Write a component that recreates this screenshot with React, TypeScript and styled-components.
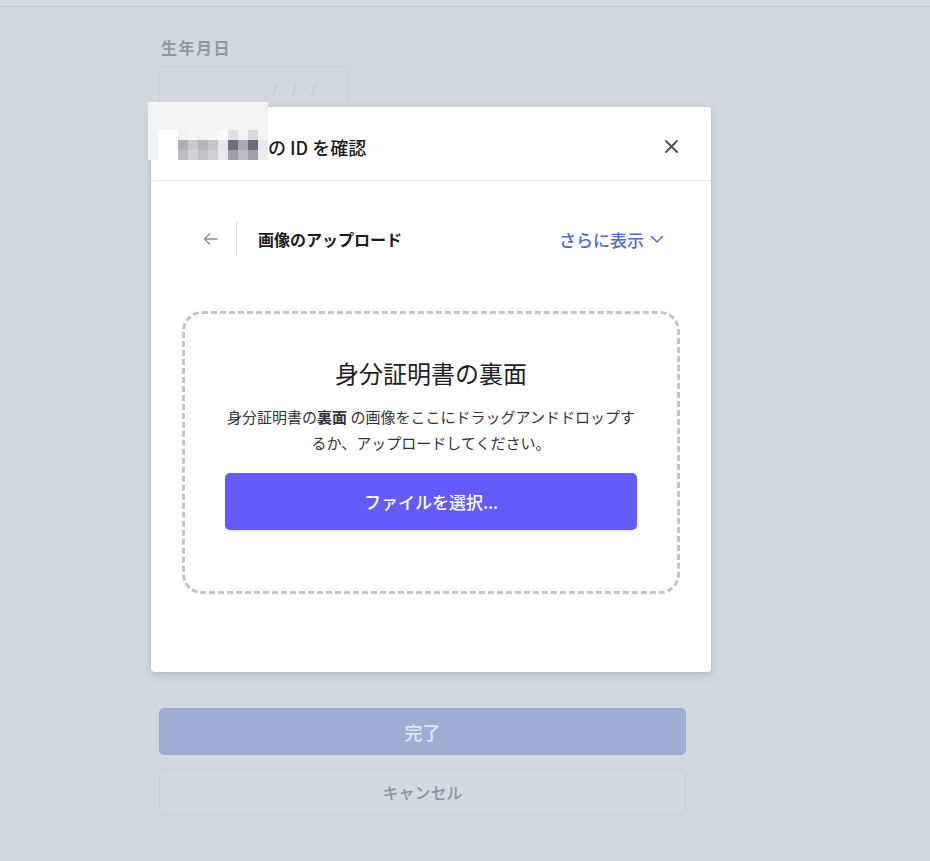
import React from "react";
import styled, { createGlobalStyle } from "styled-components";

const GlobalStyle = createGlobalStyle`
  html, body {
    margin: 0;
    padding: 0;
    background: #d1d8df;
    font-family: "Noto Sans CJK JP", "Noto Sans", "Liberation Sans", sans-serif;
  }
`;

const Page = styled.div`
  position: relative;
  width: 930px;
  height: 861px;
  overflow: hidden;
  background: #d1d8df;
`;

const TopRule = styled.div`
  height: 6px;
  border-bottom: 1px solid #c3cad2;
  background: #d5dbe2;
`;

const Form = styled.div`
  width: 527px;
  margin-left: 159px;
  padding-top: 29px;
  display: flex;
  flex-direction: column;
`;

const FieldLabel = styled.div`
  font-size: 16px;
  font-weight: 700;
  letter-spacing: 1.5px;
  line-height: 22px;
  color: #8f97a3;
  padding-left: 2px;
`;

const DateInput = styled.div`
  margin-top: 8px;
  width: 190px;
  height: 44px;
  box-sizing: border-box;
  border: 1px solid #c9d0d7;
  border-radius: 4px;
  display: flex;
  align-items: center;
  justify-content: flex-end;
  padding-right: 26px;
  font-size: 12px;
  letter-spacing: 6px;
  color: #bcc3cb;
`;

const FormButton = styled.button<{ $primary?: boolean }>`
  width: 527px;
  height: ${(p) => (p.$primary ? "47px" : "46px")};
  border-radius: 5px;
  box-sizing: border-box;
  font-family: inherit;
  font-size: ${(p) => (p.$primary ? "18px" : "16px")};
  font-weight: 500;
  border: 1px solid ${(p) => (p.$primary ? "#9ba8d1" : "#c6cdd4")};
  background: ${(p) => (p.$primary ? "#a0acd4" : "#d3d9e0")};
  color: ${(p) => (p.$primary ? "#e3e7f3" : "#8b929d")};
  margin-top: ${(p) => (p.$primary ? "598px" : "14px")};
`;

const Modal = styled.div`
  position: absolute;
  left: 151px;
  top: 107px;
  width: 560px;
  height: 565px;
  background: #ffffff;
  border-radius: 4px;
  box-shadow: 0 3px 8px rgba(60, 66, 87, 0.18), 0 0 0 1px rgba(60, 66, 87, 0.04);
  display: flex;
  flex-direction: column;
`;

const ModalHeader = styled.div`
  height: 74px;
  flex-shrink: 0;
  box-sizing: border-box;
  border-bottom: 1px solid #e3e6ea;
  display: flex;
  align-items: center;
  padding: 6px 28px 0 27px;
`;

const ModalTitle = styled.h2`
  flex: 1;
  margin: 0;
  display: flex;
  align-items: center;
  font-size: 18px;
  font-weight: 500;
  color: #1a1a1f;
`;

const NameMosaic = styled.span`
  position: relative;
  display: grid;
  grid-template-columns: repeat(9, 10px);
  grid-auto-rows: 10px;
  margin-top: -4px;

  &::before {
    content: "";
    position: absolute;
    left: -30px;
    top: -28px;
    width: 120px;
    height: 28px;
    background: #f1f3f5;
  }

  &::after {
    content: "";
    position: absolute;
    left: -30px;
    top: 0;
    width: 10px;
    height: 30px;
    background: #f1f3f5;
  }
`;

const MosaicCell = styled.span<{ $c: string }>`
  background: ${(p) => p.$c};
`;

const CloseButton = styled.button`
  width: 24px;
  height: 24px;
  padding: 0;
  border: 0;
  background: none;
  display: flex;
  align-items: center;
  justify-content: center;
  color: #4a4b57;
`;

const ModalBody = styled.div`
  display: flex;
  flex-direction: column;
  padding: 40px 31px 0;
`;

const StepBar = styled.div`
  display: flex;
  align-items: center;
  height: 36px;
  padding: 0 16px 0 19px;
`;

const BackButton = styled.button`
  width: 18px;
  height: 18px;
  padding: 0;
  border: 0;
  background: none;
  display: flex;
  align-items: center;
  justify-content: center;
  color: #8d929c;
`;

const StepDivider = styled.div`
  width: 1px;
  height: 34px;
  background: #d8dbe0;
  margin: 0 21px 0 17px;
`;

const StepTitle = styled.div`
  flex: 1;
  font-size: 16px;
  font-weight: 700;
  color: #1a1a1f;
`;

const MoreLink = styled.button`
  display: flex;
  align-items: center;
  gap: 6px;
  padding: 0;
  border: 0;
  background: none;
  font-family: inherit;
  font-size: 17px;
  font-weight: 500;
  color: #5469d4;
`;

const DropZone = styled.div`
  margin-top: 54px;
  height: 283px;
  box-sizing: border-box;
  border: 3px dashed #c4c5cb;
  border-radius: 20px;
  display: flex;
  flex-direction: column;
  align-items: center;
  padding: 44px 40px 0;
`;

const DropTitle = styled.h3`
  margin: 0;
  font-size: 24px;
  font-weight: 400;
  line-height: 30px;
  color: #1f1f24;
`;

const DropText = styled.p`
  margin: 16px 0 0;
  width: 412px;
  text-align: center;
  font-size: 15px;
  line-height: 26px;
  color: #32333a;

  strong {
    font-weight: 700;
  }
`;

const ChooseButton = styled.button`
  margin-top: 17px;
  width: 412px;
  height: 57px;
  border: 0;
  border-radius: 5px;
  background: #635cfb;
  box-shadow: 0 1px 2px rgba(50, 50, 93, 0.15);
  font-family: inherit;
  font-size: 17px;
  font-weight: 500;
  color: #ffffff;
`;

const mosaic = [
  ["#f2f2f4", "#f5f5f6", "#f2f2f4", "#f5f5f6", "#fafafa", "#e0e1e4", "#f3f3f4", "#d9dadd", "#f3f3f4"],
  ["#b0b1b8", "#c8c9ce", "#b5b6bc", "#c4c5ca", "#e6e7ea", "#6e7080", "#a8a9b1", "#6a6c7c", "#ebebed"],
  ["#bcbdc3", "#d0d1d5", "#c0c1c6", "#cfd0d4", "#e9e9ec", "#9c9eaa", "#bcbdc3", "#9fa0aa", "#ececee"],
];

export default function App() {
  return (
    <Page>
      <GlobalStyle />
      <TopRule />
      <Form>
        <FieldLabel>生年月日</FieldLabel>
        <DateInput>/ / /</DateInput>
        <FormButton $primary>完了</FormButton>
        <FormButton>キャンセル</FormButton>
      </Form>

      <Modal>
        <ModalHeader>
          <ModalTitle>
            <NameMosaic>
              {mosaic.flat().map((c, i) => (
                <MosaicCell key={i} $c={c} />
              ))}
            </NameMosaic>
            の ID を確認
          </ModalTitle>
          <CloseButton aria-label="閉じる">
            <svg width="13" height="13" viewBox="0 0 13 13">
              <path d="M1 1L12 12M12 1L1 12" stroke="currentColor" strokeWidth="1.8" strokeLinecap="round" />
            </svg>
          </CloseButton>
        </ModalHeader>

        <ModalBody>
          <StepBar>
            <BackButton aria-label="戻る">
              <svg width="15" height="12" viewBox="0 0 15 12">
                <path d="M14 6H1.5M6.5 1L1.5 6l5 5" fill="none" stroke="currentColor" strokeWidth="1.5" strokeLinecap="round" strokeLinejoin="round" />
              </svg>
            </BackButton>
            <StepDivider />
            <StepTitle>画像のアップロード</StepTitle>
            <MoreLink>
              さらに表示
              <svg width="14" height="9" viewBox="0 0 14 9">
                <path d="M1.5 1.5L7 7l5.5-5.5" fill="none" stroke="currentColor" strokeWidth="1.5" strokeLinecap="round" strokeLinejoin="round" />
              </svg>
            </MoreLink>
          </StepBar>

          <DropZone>
            <DropTitle>身分証明書の裏面</DropTitle>
            <DropText>
              身分証明書の<strong>裏面</strong> の画像をここにドラッグアンドドロップするか、アップロードしてください。
            </DropText>
            <ChooseButton>ファイルを選択...</ChooseButton>
          </DropZone>
        </ModalBody>
      </Modal>
    </Page>
  );
}
